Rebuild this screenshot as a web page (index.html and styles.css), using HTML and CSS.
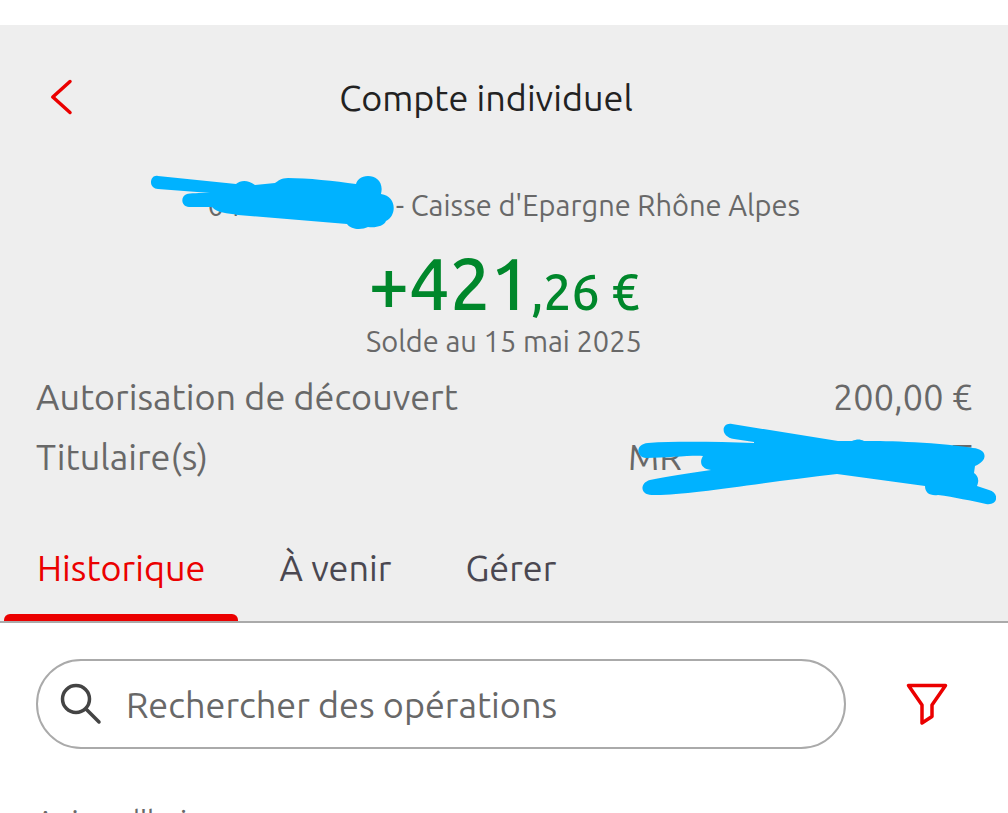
FILE: index.html
```
<!DOCTYPE html>
<html lang="fr">
<head>
  <meta charset="UTF-8" />
  <title>Compte individuel</title>
  <meta name="viewport" content="width=device-width, initial-scale=1" />
  <link rel="stylesheet" href="styles.css">
</head>
<body>
  <header class="account-header">
    <div class="top-bar">
      <button type="button" class="back-btn" aria-label="Retour">
        <svg width="52" height="52" viewBox="0 0 52 52"><path d="M34 10.500L16.800 26L34 41.500"/></svg>
      </button>
      <h1>Compte individuel</h1>
    </div>

    <div class="account-summary">
      <p class="account-ref">
        <span class="account-number">04
          <svg class="mask mask-number" width="246" height="56" viewBox="0 0 246 56" aria-hidden="true">
            <path d="M8 1C4 0 1 3 1 7.500C1 11 4 14 8 14L60 18C50 18 39 18 37 19C30 21 31 32 39 32L62 32C67 38 77 38 88 40L197 49C201 55 212 55 218 52C226 53 234 51 236 46C247 41 247 21 231 19C234 7 226 1 218 1C211 1 207 5 206 9C185 6 157 3 138 3C131 3 128 6 125 8L105 10C98 5 91 5 86 9Z"/>
          </svg>
        </span>
        <span>- Caisse d'Epargne Rhône Alpes</span>
      </p>
      <p class="balance">+421<span class="cents">,26 €</span></p>
      <p class="balance-date">Solde au 15 mai 2025</p>
    </div>

    <dl class="details">
      <div class="detail-row">
        <dt>Autorisation de découvert</dt>
        <dd>200,00 €</dd>
      </div>
      <div class="detail-row">
        <dt>Titulaire(s)</dt>
        <dd class="holder">
          <span>MR</span><span>T</span>
          <svg class="mask mask-holder" width="360" height="82" viewBox="0 0 360 82" aria-hidden="true">
            <path d="M96 1C85 -1 84 14 98 16L118 19V20C82 19 42 18 12 20C-1 21 0 34 10 35C32 35 56 32 67 33C63 39 65 46 75 47C52 50 30 54 14 57C3 60 4 73 17 72C48 73 122 60 201 51L289 63C289 70 294 73 302 72C318 74 336 78 350 81C363 83 363 69 353 67L341 63C344 56 341 52 338 50L339 43C353 37 351 26 337 25C294 18 240 18 228 18C224 16 221 16 216 18H202Z"/>
          </svg>
        </dd>
      </div>
    </dl>

    <nav class="tabs">
      <a href="#historique" class="tab active">Historique</a>
      <a href="#avenir" class="tab">À venir</a>
      <a href="#gerer" class="tab">Gérer</a>
    </nav>
  </header>

  <main class="history" id="historique">
    <form class="search-row">
      <label class="search-box" for="search">
        <svg width="44" height="44" viewBox="0 0 44 44" aria-hidden="true">
          <circle cx="18" cy="17" r="13.500"/><path d="M28 27L41 40"/>
        </svg>
        <input type="search" id="search" placeholder="Rechercher des opérations" aria-label="Rechercher des opérations">
      </label>
      <button type="button" class="filter-btn" aria-label="Filtrer">
        <svg width="44" height="44" viewBox="0 0 44 44"><path d="M3.500 3.500H40.500L27 23V34.500L17 41V23Z"/></svg>
      </button>
    </form>
    <h2>Aujourd'hui</h2>
  </main>
</body>
</html>
```

FILE: styles.css
```
:root {
  --primary-color: #eb0000;
  --positive-color: #00872b;
  --title-color: #222;
  --text-color: #4a4750;
  --light-text: #686868;
  --header-background: #eee;
  --border-color: #aaa;
  --mask-color: #00b2ff;
}

* {
  box-sizing: border-box;
  margin: 0;
  padding: 0;
}

body {
  font-family: 'Ubuntu', 'Noto Sans', sans-serif;
  font-size: 36px;
  color: var(--light-text);
  background: #fff;
  height: 100vh;
  padding-top: 25px;
  overflow: hidden;
}

button {
  border: none;
  background: none;
  cursor: pointer;
}

svg {
  display: block;
  fill: none;
  stroke-linecap: round;
  stroke-linejoin: round;
}

.account-header {
  background: var(--header-background);
  border-bottom: 2px solid var(--border-color);
}

.top-bar {
  display: flex;
  align-items: center;
  height: 144px;
  padding: 0 124px 0 36px;
}

.back-btn svg {
  stroke: var(--primary-color);
  stroke-width: 3.5;
}

h1 {
  flex: 1;
  text-align: center;
  font-size: 36px;
  font-weight: 400;
  color: var(--title-color);
}

.account-summary {
  text-align: center;
  font-size: 29px;
}

.account-ref {
  display: flex;
  justify-content: center;
  line-height: 72px;
}

.account-number {
  position: relative;
  width: 188px;
  text-align: left;
}

.mask {
  position: absolute;
  fill: var(--mask-color);
}

.mask-number {
  top: 6px;
  left: -58px;
}

.balance {
  margin-top: 7px;
  font-size: 72px;
  font-weight: 500;
  line-height: 72px;
  color: var(--positive-color);
}

.cents {
  font-size: 50px;
}

.balance-date {
  line-height: 28px;
}

.details {
  padding: 12px 36px 0;
}

.detail-row {
  display: flex;
  justify-content: space-between;
  line-height: 60px;
}

.holder {
  position: relative;
  display: flex;
  justify-content: space-between;
  width: 344px;
}

.mask-holder {
  top: -4px;
  right: -24px;
}

.tabs {
  display: flex;
  gap: 8px;
  padding: 35px 4px 0;
}

.tab {
  padding: 0 33px;
  line-height: 92px;
  color: var(--text-color);
  text-decoration: none;
  border-bottom: 7px solid transparent;
}

.tab.active {
  position: relative;
  color: var(--primary-color);
}

.tab.active::after {
  content: '';
  position: absolute;
  left: 0;
  right: 0;
  bottom: -7px;
  height: 7px;
  border-radius: 6px 6px 0 0;
  background: var(--primary-color);
}

.history {
  padding: 36px;
}

.search-row {
  display: flex;
  gap: 36px;
}

.search-box {
  flex: 1;
  display: flex;
  align-items: center;
  gap: 24px;
  height: 90px;
  padding: 0 20px;
  border: 2px solid var(--border-color);
  border-radius: 45px;
}

.search-box svg {
  stroke: #444;
  stroke-width: 3.5;
}

.search-box input {
  flex: 1;
  min-width: 0;
  border: none;
  outline: none;
  background: none;
  font: inherit;
  color: var(--light-text);
}

.search-box input::placeholder {
  color: var(--light-text);
  opacity: 1;
}

.filter-btn {
  display: flex;
  align-items: center;
  justify-content: center;
  width: 90px;
}

.filter-btn svg {
  stroke: var(--primary-color);
  stroke-width: 3.5;
}

h2 {
  margin-top: 56px;
  font-size: 29px;
  font-weight: 400;
}

@media (max-width: 700px) {
  body {
    font-size: 20px;
  }

  .top-bar {
    padding: 0 36px;
  }

  .tab {
    padding: 0 16px;
  }
}
```
